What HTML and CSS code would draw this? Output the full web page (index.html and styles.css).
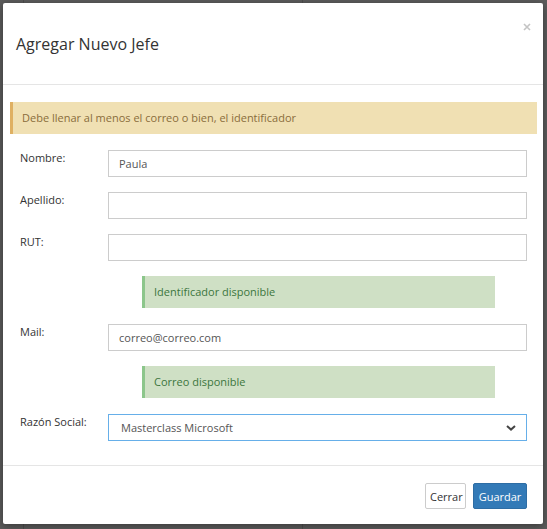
FILE: index.html
```html
<!DOCTYPE html>
<html lang="es">
<head>
  <meta charset="UTF-8" />
  <meta name="viewport" content="width=device-width, initial-scale=1.0" />
  <title>Agregar Nuevo Jefe</title>
  <link rel="stylesheet" href="styles.css">
</head>
<body>
  <div class="backdrop">
    <div class="modal">
      <div class="modal-header">
        <button class="close" type="button" aria-label="Cerrar">
          <svg width="8" height="8" viewBox="0 0 8 8"><path d="M1 1L7 7M7 1L1 7" stroke="#c4c4c4" stroke-width="1.6" /></svg>
        </button>
        <h4 class="modal-title">Agregar Nuevo Jefe</h4>
      </div>

      <div class="modal-body">
        <div class="alert alert-warning">Debe llenar al menos el correo o bien, el identificador</div>

        <form class="form">
          <div class="row">
            <label for="nombre">Nombre:</label>
            <input id="nombre" type="text" value="Paula" />
          </div>
          <div class="row">
            <label for="apellido">Apellido:</label>
            <input id="apellido" type="text" value="" />
          </div>
          <div class="row">
            <label for="rut">RUT:</label>
            <input id="rut" type="text" value="" />
          </div>
          <div class="alert alert-success">Identificador disponible</div>
          <div class="row">
            <label for="mail">Mail:</label>
            <input id="mail" type="text" value="correo@correo.com" />
          </div>
          <div class="alert alert-success">Correo disponible</div>
          <div class="row">
            <label for="razon">Razón Social:</label>
            <div class="select focus">
              <span>Masterclass Microsoft</span>
              <svg width="10" height="6" viewBox="0 0 10 6"><path d="M1 1L5 4.6L9 1" fill="none" stroke="#444" stroke-width="2" /></svg>
            </div>
          </div>
        </form>
      </div>

      <div class="modal-footer">
        <button class="btn btn-default" type="button">Cerrar</button>
        <button class="btn btn-primary" type="button">Guardar</button>
      </div>
    </div>
  </div>
</body>
</html>
```

FILE: styles.css
```css
body {
  margin: 0;
  font-family: "Open Sans", Arial, sans-serif;
  font-size: 11px;
  color: #333;
  background: #5c5c5c;
}

.backdrop {
  height: 529px;
  padding: 3px 4px 0 3px;
  box-sizing: border-box;
  background: linear-gradient(to right, transparent 23px, #4e4e4e 23px, #4e4e4e 24px, transparent 24px),
              linear-gradient(to right, transparent 302px, #4e4e4e 302px, #4e4e4e 303px, transparent 303px);
  background-color: #5c5c5c;
}

.modal {
  width: 540px;
  height: 521px;
  background: white;
  border-radius: 2px;
  box-shadow: 0 2px 8px rgba(0, 0, 0, 0.4);
  display: flex;
  flex-direction: column;
}

.modal-header {
  position: relative;
  padding: 29px 16px 28px 13px;
  border-bottom: 1px solid #e5e5e5;
}

.modal-title {
  margin: 0;
  font-size: 16px;
  font-weight: normal;
  line-height: 24px;
  color: #333;
}

.close {
  position: absolute;
  top: 16px;
  right: 12px;
  border: none;
  background: none;
  padding: 0;
  cursor: pointer;
}

.modal-body {
  flex: 1;
  padding: 17px 6px 0 7px;
}

.alert {
  height: 32px;
  line-height: 32px;
  padding-left: 9px;
  box-sizing: border-box;
  font-size: 11px;
}

.alert-warning {
  background: #f0e0b3;
  border-left: 3px solid #dfb062;
  color: #8a6d3b;
}

.alert-success {
  width: 353px;
  margin: 14px 0 16px 122px;
  background: #cfe0c5;
  border-left: 3px solid #8cc68b;
  color: #3c763d;
}

.form {
  padding: 16px 10px 0 10px;
}

.row {
  display: flex;
  align-items: flex-start;
  margin-bottom: 15px;
}

.row label {
  width: 88px;
  flex: none;
  line-height: 16px;
}

.row input {
  flex: 1;
  height: 27px;
  box-sizing: border-box;
  border: 1px solid #ccc;
  padding: 0 10px;
  font-family: "Open Sans", Arial, sans-serif;
  font-size: 11px;
  color: #555;
  outline: none;
}

.select {
  flex: 1;
  height: 27px;
  box-sizing: border-box;
  border: 1px solid #ccc;
  padding: 0 10px 0 12px;
  display: flex;
  align-items: center;
  justify-content: space-between;
  color: #555;
}

.select.focus {
  border-color: #66afe9;
}

.select svg {
  margin-top: 1px;
}

.modal-footer {
  display: flex;
  justify-content: flex-end;
  gap: 7px;
  padding: 17px 16px 15px;
  border-top: 1px solid #e5e5e5;
}

.btn {
  height: 26px;
  padding: 0 4px;
  font-family: "Open Sans", Arial, sans-serif;
  font-size: 11px;
  border-radius: 2px;
  cursor: pointer;
}

.btn-default {
  width: 41px;
  background: white;
  border: 1px solid #ccc;
  color: #333;
}

.btn-primary {
  width: 54px;
  background: #337ab7;
  border: 1px solid #2e6da4;
  color: white;
}
```
